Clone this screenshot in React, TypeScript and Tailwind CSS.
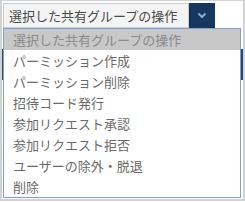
import React from "react";

const items = [
  "パーミッション作成",
  "パーミッション削除",
  "招待コード発行",
  "参加リクエスト承認",
  "参加リクエスト拒否",
  "ユーザーの除外・脱退",
  "削除",
];

export default function App() {
  return (
    <div
      className="relative w-[245px] h-[201px] border-x-2 border-b-2 border-t border-[#d2d2d2] bg-white overflow-hidden"
      style={{ fontFamily: '"Noto Sans CJK JP", "Noto Sans", sans-serif' }}
    >
      <div className="ml-[1px] mt-[2px] flex w-[212px] h-[25px]">
        <div className="flex-1 flex items-center pl-[5px] bg-[#f4f4f4] border border-[#c9ccd2] text-[13px] text-[#4a4a4a] leading-none">
          選択した共有グループの操作
        </div>
        <div className="w-[26px] bg-[#17375e] flex items-center justify-center">
          <svg width="10" height="7" viewBox="0 0 10 7">
            <path d="M1.5 1.5 L5 5 L8.5 1.5" fill="none" stroke="#7fb0e6" strokeWidth="2" />
          </svg>
        </div>
      </div>
      <div className="mt-[21px] h-[31px] bg-[#27497a]" />
      <div className="absolute left-[1px] top-[27px] w-[238px] border border-[#7f9fd8] bg-white">
        <div className="h-[21px] flex items-center pl-[9px] bg-[#c8c8c8] text-[13px] text-[#8a8a8a] leading-none">
          選択した共有グループの操作
        </div>
        {items.map((t) => (
          <div key={t} className="h-[21px] flex items-center pl-[9px] text-[13px] text-[#6a6a6a] leading-none">
            {t}
          </div>
        ))}
      </div>
    </div>
  );
}
